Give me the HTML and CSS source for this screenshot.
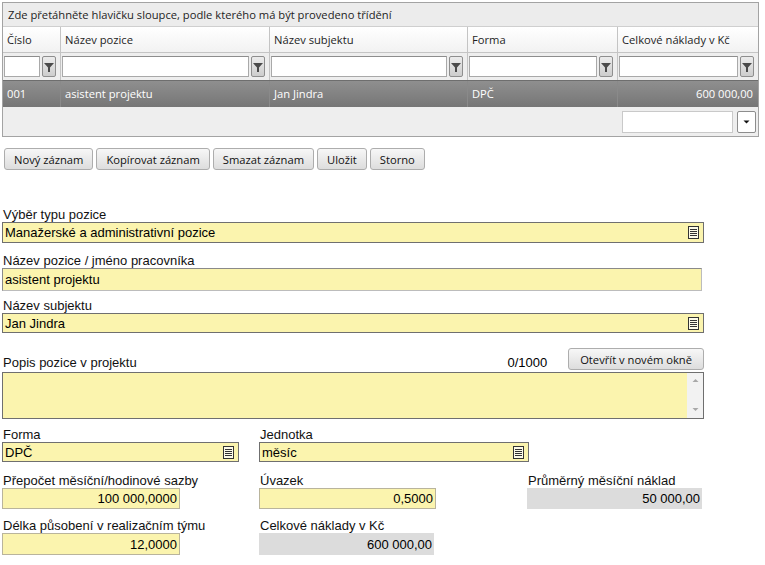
FILE: index.html
```html
<!DOCTYPE html>
<html lang="cs">
<head>
<meta charset="utf-8">
<title>Pozice</title>
<link rel="stylesheet" href="styles.css">
</head>
<body>
<div class="page">
  <div class="grid">
    <div class="group-panel">Zde přetáhněte hlavičku sloupce, podle kterého má být provedeno třídění</div>
    <div class="row head">
      <div class="cell">Číslo</div>
      <div class="cell">Název pozice</div>
      <div class="cell">Název subjektu</div>
      <div class="cell">Forma</div>
      <div class="cell">Celkové náklady v Kč</div>
    </div>
    <div class="row filters">
      <div class="cell fcell"><span class="finput"></span><span class="fbtn"><svg width="12" height="14" viewBox="0 0 12 14"><path d="M1 3 H11 L7 7.5 V12 H5 V7.5 Z" fill="#4a4a4a"/></svg></span></div>
      <div class="cell fcell"><span class="finput"></span><span class="fbtn"><svg width="12" height="14" viewBox="0 0 12 14"><path d="M1 3 H11 L7 7.5 V12 H5 V7.5 Z" fill="#4a4a4a"/></svg></span></div>
      <div class="cell fcell"><span class="finput"></span><span class="fbtn"><svg width="12" height="14" viewBox="0 0 12 14"><path d="M1 3 H11 L7 7.5 V12 H5 V7.5 Z" fill="#4a4a4a"/></svg></span></div>
      <div class="cell fcell"><span class="finput"></span><span class="fbtn"><svg width="12" height="14" viewBox="0 0 12 14"><path d="M1 3 H11 L7 7.5 V12 H5 V7.5 Z" fill="#4a4a4a"/></svg></span></div>
      <div class="cell fcell"><span class="finput"></span><span class="fbtn"><svg width="12" height="14" viewBox="0 0 12 14"><path d="M1 3 H11 L7 7.5 V12 H5 V7.5 Z" fill="#4a4a4a"/></svg></span></div>
    </div>
    <div class="row data">
      <div class="cell">001</div>
      <div class="cell">asistent projektu</div>
      <div class="cell">Jan Jindra</div>
      <div class="cell">DPČ</div>
      <div class="cell num">600 000,00</div>
    </div>
    <div class="footer">
      <span class="pager-input"></span>
      <span class="dd"><svg width="9" height="6" viewBox="0 0 9 6"><path d="M1.5 1.5 H7.5 L4.5 4.5 Z" fill="#111"/></svg></span>
    </div>
  </div>

  <div class="toolbar">
    <button class="btn">Nový záznam</button>
    <button class="btn">Kopírovat záznam</button>
    <button class="btn">Smazat záznam</button>
    <button class="btn">Uložit</button>
    <button class="btn">Storno</button>
  </div>

  <div class="form">
    <div class="block b1">
      <div class="lbl">Výběr typu pozice</div>
      <div class="field select h21">Manažerské a administrativní pozice<span class="licon"><svg width="11" height="13" viewBox="0 0 11 13"><rect x="0.5" y="0.5" width="10" height="12" fill="#fdfbe8" stroke="#333"/><path d="M2 3.5 H9 M2 5.5 H9 M2 7.5 H9 M2 9.5 H9" stroke="#333"/></svg></span></div>
    </div>
    <div class="block b2">
      <div class="lbl">Název pozice / jméno pracovníka</div>
      <div class="field text h23">asistent projektu</div>
    </div>
    <div class="block b3">
      <div class="lbl">Název subjektu</div>
      <div class="field select h20">Jan Jindra<span class="licon"><svg width="11" height="13" viewBox="0 0 11 13"><rect x="0.5" y="0.5" width="10" height="12" fill="#fdfbe8" stroke="#333"/><path d="M2 3.5 H9 M2 5.5 H9 M2 7.5 H9 M2 9.5 H9" stroke="#333"/></svg></span></div>
    </div>
    <div class="block b4">
      <div class="popis-row">
        <div class="lbl grow">Popis pozice v projektu</div>
        <div class="counter">0/1000</div>
        <button class="btn open">Otevřít v novém okně</button>
      </div>
      <div class="textarea">
        <div class="scroll">
          <svg width="7" height="5" viewBox="0 0 7 5"><path d="M0.5 4 L3.5 1 L6.5 4 Z" fill="#a8a8a8"/></svg>
          <svg width="7" height="5" viewBox="0 0 7 5"><path d="M0.5 1 L3.5 4 L6.5 1 Z" fill="#a8a8a8"/></svg>
        </div>
      </div>
    </div>
    <div class="cols r1">
      <div>
        <div class="lbl">Forma</div>
        <div class="field select w237 h20">DPČ<span class="licon"><svg width="11" height="13" viewBox="0 0 11 13"><rect x="0.5" y="0.5" width="10" height="12" fill="#fdfbe8" stroke="#333"/><path d="M2 3.5 H9 M2 5.5 H9 M2 7.5 H9 M2 9.5 H9" stroke="#333"/></svg></span></div>
      </div>
      <div>
        <div class="lbl">Jednotka</div>
        <div class="field select w270 h20">měsíc<span class="licon"><svg width="11" height="13" viewBox="0 0 11 13"><rect x="0.5" y="0.5" width="10" height="12" fill="#fdfbe8" stroke="#333"/><path d="M2 3.5 H9 M2 5.5 H9 M2 7.5 H9 M2 9.5 H9" stroke="#333"/></svg></span></div>
      </div>
    </div>
    <div class="cols r2">
      <div>
        <div class="lbl">Přepočet měsíční/hodinové sazby</div>
        <div class="field numf w178 h21">100 000,0000</div>
      </div>
      <div>
        <div class="lbl">Úvazek</div>
        <div class="field numf w177 h21">0,5000</div>
      </div>
      <div>
        <div class="lbl">Průměrný měsíční náklad</div>
        <div class="field ro w175 h21">50 000,00</div>
      </div>
    </div>
    <div class="cols r3">
      <div>
        <div class="lbl">Délka působení v realizačním týmu</div>
        <div class="field numf w178 h22">12,0000</div>
      </div>
      <div>
        <div class="lbl">Celkové náklady v Kč</div>
        <div class="field ro w175 h22">600 000,00</div>
      </div>
    </div>
  </div>
</div>
</body>
</html>
```

FILE: styles.css
```css
* { box-sizing: border-box; }
html, body { margin: 0; padding: 0; background: #fff; }
body { font-family: "Liberation Sans", Arial, sans-serif; color: #000; }
.page { padding: 2px 0 0 2px; }

.grid {
  width: 757px;
  border: 1px solid #a3a3a3;
  font-family: "Open Sans", "DejaVu Sans", sans-serif;
  font-size: 11.2px;
  color: #1e1e1e;
}
.group-panel {
  height: 24px;
  line-height: 23px;
  padding-left: 5px;
  background: #ececec;
  border-bottom: 1px solid #cfcfcf;
}
.row {
  display: grid;
  grid-template-columns: 58px 209px 198px 150px 1fr;
}
.cell {
  border-right: 1px solid #c4c4c4;
  padding-left: 4px;
  white-space: nowrap;
  overflow: hidden;
}
.cell:last-child { border-right: none; }
.head { height: 26px; background: linear-gradient(#ffffff, #f2f2f2); border-bottom: 1px solid #c4c4c4; }
.head .cell { line-height: 25px; }
.filters { height: 28px; background: #eeeeee; border-bottom: 1px solid #6e6e6e; }
.fcell { display: flex; align-items: flex-start; gap: 2px; padding: 3px 4px 0 1px; }
.finput {
  flex: 1;
  height: 21px;
  background: #fff;
  border: 1px solid #a9a9a9;
  border-top-color: #8d8d8d;
}
.fbtn {
  width: 14px;
  height: 21px;
  border: 1px solid #8e8e8e;
  border-radius: 2px;
  background: linear-gradient(#ececec, #cdcdcd);
  display: flex;
  align-items: center;
  justify-content: center;
}
.data { height: 26px; background: linear-gradient(#8f8f8f, #767676); color: #fff; }
.data .cell { line-height: 25px; border-right-color: #8a8a8a; }
.data .num { text-align: right; padding-right: 5px; }
.footer {
  height: 29px;
  background: #eeeeee;
  display: flex;
  justify-content: flex-end;
  align-items: flex-start;
  gap: 4px;
  padding: 4px 2px 0 0;
}
.pager-input { width: 111px; height: 22px; background: #fff; border: 1px solid #c9c9c9; }
.dd {
  width: 19px; height: 22px; background: #fff;
  border: 1px solid #8d8d8d; border-radius: 2px;
  display: flex; align-items: center; justify-content: center;
}

.toolbar { display: flex; gap: 3px; margin: 11px 0 0 2px; }
.btn {
  height: 22px;
  padding: 0 9px;
  font-family: "Open Sans", "DejaVu Sans", sans-serif;
  font-size: 11.2px;
  color: #111;
  background: linear-gradient(#f7f7f7, #dddddd);
  border: 1px solid #adadad;
  border-radius: 3px;
  margin: 0;
}

.form { margin-top: 37px; width: 702px; }
.lbl { font-size: 13px; line-height: 15px; height: 15px; padding-left: 1px; white-space: nowrap; color: #111; }
.b2 { margin-top: 10px; }
.b3 { margin-top: 7px; }
.b4 { margin-top: 15px; }
.field {
  position: relative;
  font-size: 13px;
  line-height: 15px;
  padding: 0 2px;
  display: flex;
  align-items: center;
  background: #fbf4ae;
  white-space: nowrap;
}
.select { border: 1px solid #6f6f6f; }
.text { border: 1px solid #bcbcbc; border-top-color: #8a8a8a; border-left-color: #8a8a8a; width: 700px; }
.numf { border: 1px solid #b9b49c; justify-content: flex-end; }
.ro { background: #dcdcdc; justify-content: flex-end; }
.h20 { height: 20px; }
.h21 { height: 21px; }
.h22 { height: 22px; }
.h23 { height: 23px; }
.w237 { width: 237px; }
.w270 { width: 270px; }
.w178 { width: 178px; }
.w177 { width: 177px; }
.w175 { width: 175px; }
.licon { margin-left: auto; margin-right: 2px; display: flex; }

.popis-row { display: flex; align-items: flex-end; height: 22px; }
.grow { flex: 1; }
.counter { font-size: 13px; line-height: 15px; margin-right: 21px; }
.btn.open { height: 22px; padding: 0 11px; }
.textarea {
  margin-top: 2px;
  width: 702px;
  height: 47px;
  background: #fbf4ae;
  border: 1px solid #6f6f6f;
  display: flex;
  justify-content: flex-end;
}
.scroll {
  width: 16px;
  background: #f2f2f2;
  display: flex;
  flex-direction: column;
  justify-content: space-between;
  align-items: center;
  padding: 5px 0 6px;
}

.cols { display: grid; grid-template-columns: 257px 268px 175px; }
.r1 { margin-top: 8px; }
.r2 { margin-top: 11px; }
.r3 { margin-top: 9px; }
```
